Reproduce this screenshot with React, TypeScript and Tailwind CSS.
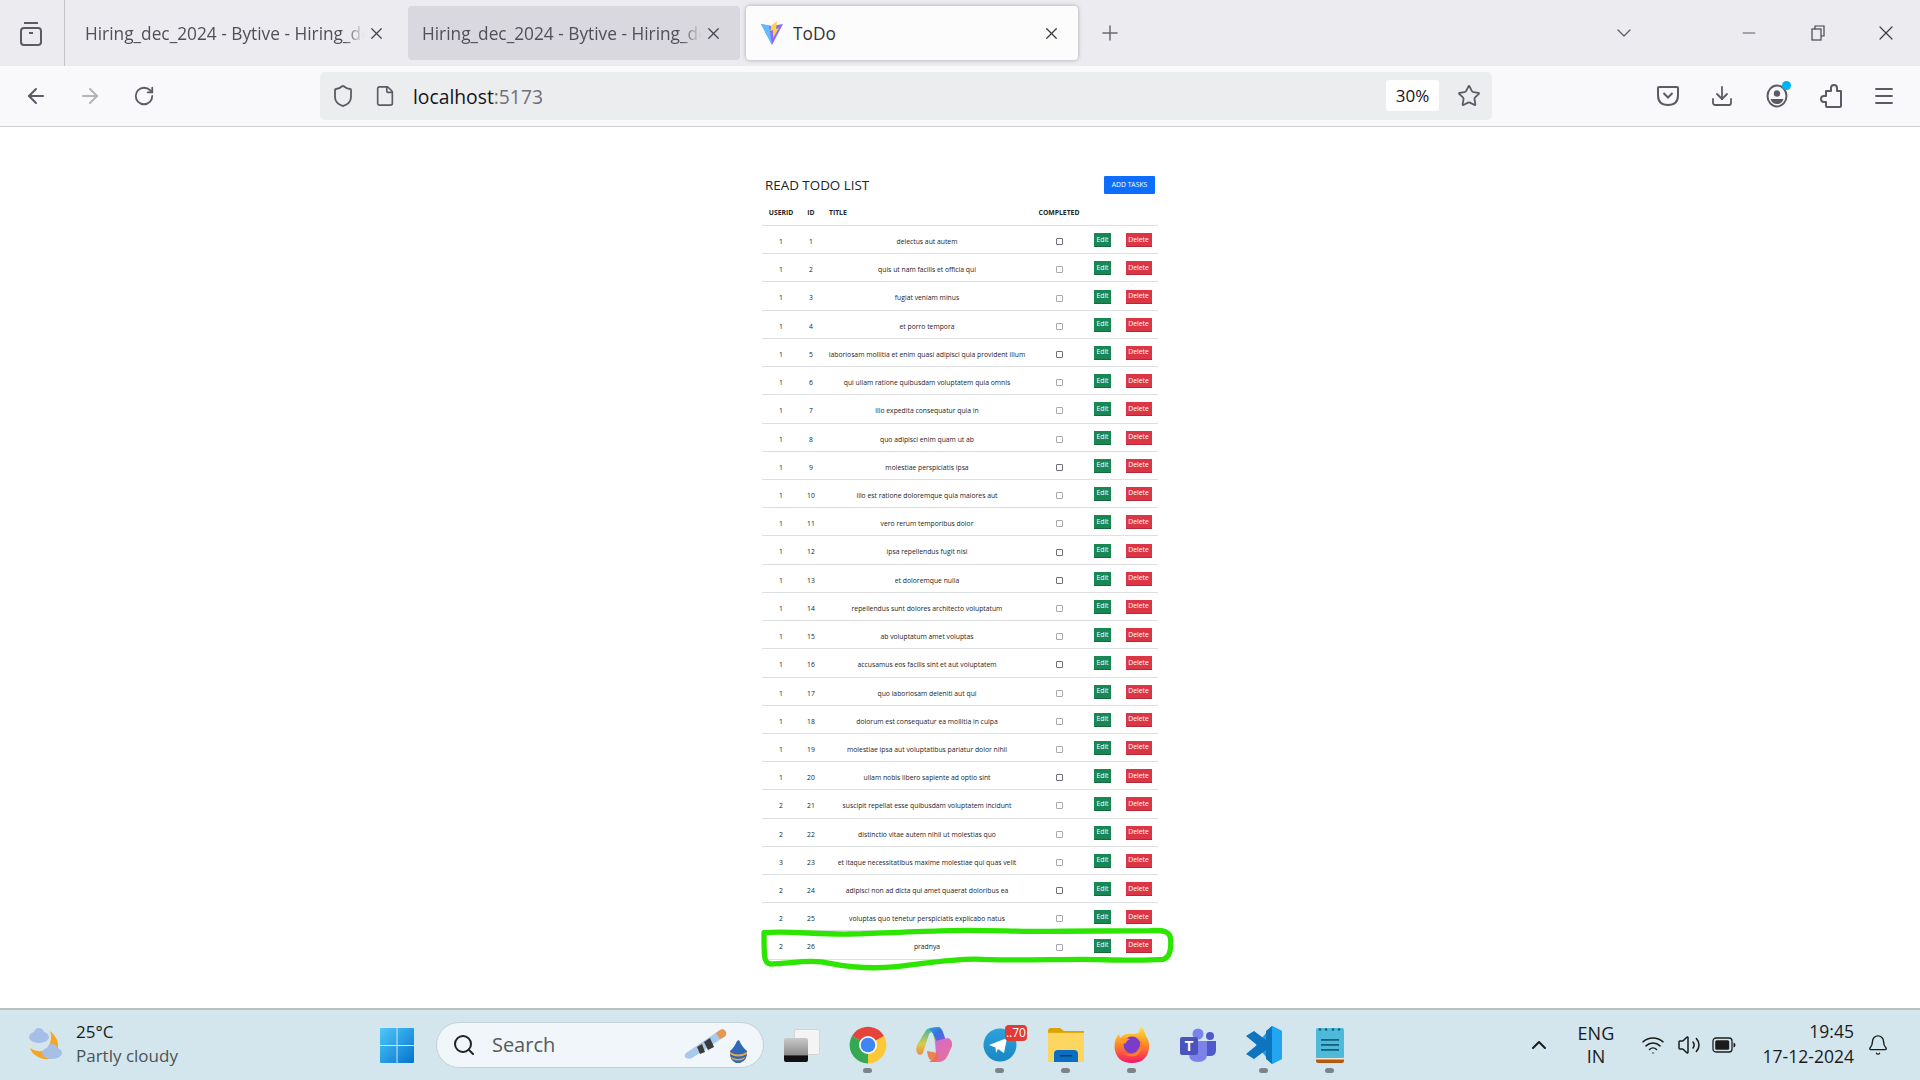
import React from "react"
import { ArrowLeft, ArrowRight, RotateCw, Shield, File, Star, Download, Menu, X, Plus, ChevronDown, ChevronUp, Minus, Search, Wifi, Volume2, Bell } from "lucide-react"

const titles = [
  "delectus aut autem",
  "quis ut nam facilis et officia qui",
  "fugiat veniam minus",
  "et porro tempora",
  "laboriosam mollitia et enim quasi adipisci quia provident illum",
  "qui ullam ratione quibusdam voluptatem quia omnis",
  "illo expedita consequatur quia in",
  "quo adipisci enim quam ut ab",
  "molestiae perspiciatis ipsa",
  "illo est ratione doloremque quia maiores aut",
  "vero rerum temporibus dolor",
  "ipsa repellendus fugit nisi",
  "et doloremque nulla",
  "repellendus sunt dolores architecto voluptatum",
  "ab voluptatum amet voluptas",
  "accusamus eos facilis sint et aut voluptatem",
  "quo laboriosam deleniti aut qui",
  "dolorum est consequatur ea mollitia in culpa",
  "molestiae ipsa aut voluptatibus pariatur dolor nihil",
  "ullam nobis libero sapiente ad optio sint",
  "suscipit repellat esse quibusdam voluptatem incidunt",
  "distinctio vitae autem nihil ut molestias quo",
  "et itaque necessitatibus maxime molestiae qui quas velit",
  "adipisci non ad dicta qui amet quaerat doloribus ea",
  "voluptas quo tenetur perspiciatis explicabo natus",
  "pradnya",
]

// these rows land on whole pixels in the reference, so their boxes look darker
const darkBoxes = [1, 5, 9, 12, 13, 16, 20, 24]

const ViteLogo = () => (
  <svg width="22" height="24" viewBox="0 0 22 24">
    <path d="M0 3 L11 5 L22 3 L11 24 Z" fill="#8f6cf5" />
    <path d="M0 3 L8 4.5 L11 24 Z" fill="#5ec0f8" />
    <path d="M10 5 L16 0 L15 8 L18 7 L12 17 L12 9 L9.500 10 Z" fill="#ffd23f" />
  </svg>
)

const Tab = ({ title, active, hover }: { title: string; active?: boolean; hover?: boolean }) => (
  <div className={`flex h-[54px] w-[332px] items-center rounded-[4px] ${active ? "bg-[#fcfcfc] shadow-[0_0_4px_rgba(0,0,0,0.3)]" : hover ? "bg-[#d9d8de]" : ""}`}>
    {active ? (
      <div className="ml-[15px] mr-[10px] flex w-[22px] justify-center"><ViteLogo /></div>
    ) : (
      <div className="w-[14px]" />
    )}
    <div className={`w-[279px] overflow-hidden whitespace-nowrap pt-[1px] text-[17.3px] ${active ? "text-[#33323a]" : "text-[#50505a] [mask-image:linear-gradient(to_right,black_93%,transparent)]"}`}>
      {title}
    </div>
    <X className={active ? "-ml-[30px] text-[#3c3c44]" : "ml-[3px] text-[#45454d]"} size={19} strokeWidth={1.6} />
  </div>
)

const ToolIcon = ({ children, w }: { children: React.ReactNode; w: string }) => (
  <div className={`flex items-center justify-center ${w}`}>{children}</div>
)

const Chrome = () => (
  <svg width="38" height="38" viewBox="0 0 38 38">
    <path d="M19 19 L3 10 A18.500 18.500 0 0 1 35 10 Z" fill="#e5443a" />
    <path d="M19 19 L35 10 A18.500 18.500 0 0 1 19 37.500 Z" fill="#fcc934" />
    <path d="M19 19 L19 37.500 A18.500 18.500 0 0 1 3 10 Z" fill="#34a853" />
    <circle cx="19" cy="19" r="9" fill="#fff" />
    <circle cx="19" cy="19" r="7.300" fill="#3f85f3" />
  </svg>
)

const Copilot = () => (
  <svg width="38" height="36" viewBox="0 0 38 36">
    <defs>
      <linearGradient id="copa" x1="0" y1="0" x2="1" y2="1">
        <stop offset="0" stopColor="#2d9fe0" />
        <stop offset="0.5" stopColor="#3b6fe0" />
        <stop offset="1" stopColor="#7c5ce0" />
      </linearGradient>
      <linearGradient id="copb" x1="0" y1="0" x2="0" y2="1">
        <stop offset="0" stopColor="#3bb3a8" />
        <stop offset="0.6" stopColor="#d9cc4a" />
        <stop offset="1" stopColor="#f08a3c" />
      </linearGradient>
      <linearGradient id="copc" x1="0" y1="0" x2="1" y2="1">
        <stop offset="0" stopColor="#c86ae0" />
        <stop offset="1" stopColor="#f0708a" />
      </linearGradient>
    </defs>
    <path d="M10 5 Q12 1 16 1 L24 1 Q27 2 28 8 L30 16 L20 16 L18 6 Q16 4 14 7 L8 26 Q6 29 3 27 Q0 24 2 18 Z" fill="url(#copb)" />
    <path d="M14 2 Q16 0 24 0 Q27 1 29 8 L31 14 L21 14 Q19 6 14 2 Z" fill="url(#copa)" />
    <path d="M20 14 L33 11 Q38 13 37 19 L33 28 Q30 35 24 35 L14 35 Q19 33 21 28 Z" fill="url(#copc)" />
    <path d="M12 24 Q13 35 20 35 Q24 33 23 26 Z" fill="#f0703c" opacity="0.85" />
  </svg>
)

const Telegram = () => (
  <div className="relative">
    <svg width="34" height="34" viewBox="0 0 34 34">
      <defs>
        <linearGradient id="tg" x1="0" y1="0" x2="0" y2="1">
          <stop offset="0" stopColor="#2aa3dc" />
          <stop offset="1" stopColor="#1a87c3" />
        </linearGradient>
      </defs>
      <circle cx="17" cy="17" r="16.500" fill="url(#tg)" />
      <path d="M6 17 L24 10 L21 25 L15 21 L13 25 L12.500 19.500 Z" fill="#fff" />
    </svg>
    <div className="absolute -right-[10px] -top-[3px] flex h-[16px] w-[22px] items-center justify-center rounded-[4px] bg-[#e53935] text-[12px] text-white">..70</div>
  </div>
)

const Folder = () => (
  <svg width="36" height="34" viewBox="0 0 36 34">
    <path d="M0 3 Q0 0 3 0 L12 0 L16 3 L36 3 L36 10 L0 10 Z" fill="#d9a300" />
    <rect x="0" y="4" width="36" height="30" fill="#fdd662" />
    <rect x="0" y="4" width="36" height="1" fill="#e0a90c" />
    <path d="M6 34 L6 26 Q6 22 10 22 L26 22 Q30 22 30 26 L30 34 Z" fill="#0a6fc2" />
    <rect x="12" y="27" width="12" height="1.500" fill="#053e72" />
  </svg>
)

const Firefox = () => (
  <svg width="36" height="38" viewBox="0 0 36 38">
    <defs>
      <linearGradient id="ff" x1="0.500" y1="0" x2="0.500" y2="1">
        <stop offset="0" stopColor="#ffe83d" />
        <stop offset="0.5" stopColor="#ff8a24" />
        <stop offset="1" stopColor="#f5156a" />
      </linearGradient>
    </defs>
    <path d="M27 0 Q31 5 32 10 Q36 16 35 22 Q33 37 18 37 Q2 37 0.500 21 Q0.500 13 5 8 L6 12 Q11 7 17 8 Q24 8 25 6 Z" fill="url(#ff)" />
    <circle cx="18" cy="19" r="8.500" fill="#7b3cc8" />
    <path d="M4 14 Q10 11 16 13 Q12 15 12 17 Q8 19 4 14 Z" fill="#ff9a2a" />
    <path d="M26 13 Q32 22 24 29 Q16 33 9 27 Q16 30 22 26 Q28 20 26 13 Z" fill="#ff7a24" />
  </svg>
)

const Teams = () => (
  <svg width="36" height="34" viewBox="0 0 36 34">
    <circle cx="18" cy="6" r="5.500" fill="#7b83eb" />
    <circle cx="30" cy="8" r="4" fill="#5059c9" />
    <path d="M24 13 L36 13 L36 22 Q36 28 30 28 L24 28 Z" fill="#5059c9" />
    <path d="M9 13 L27 13 L27 26 Q27 34 18 34 Q9 34 9 26 Z" fill="#7b83eb" />
    <rect x="0" y="9" width="18" height="18" rx="2" fill="#4b53bc" />
    <text x="9" y="23" textAnchor="middle" fontSize="14" fontWeight="700" fill="#fff" fontFamily="Liberation Sans">T</text>
  </svg>
)

const VSCode = () => (
  <svg width="36" height="38" viewBox="0 0 36 38">
    <path d="M26 0 L36 5 L36 33 L26 38 L10 19 Z" fill="#1f9cf0" />
    <path d="M26 0 L26 38 L20 33 L20 24 L8 33 L0 28 L11 19 L0 10 L8 5 L20 14 L20 5 Z" fill="#0e74bd" />
    <path d="M26 0 L36 5 L36 33 L26 38 Z" fill="#23a6f2" />
  </svg>
)

const Notepad = () => (
  <svg width="28" height="36" viewBox="0 0 28 36">
    <rect x="0" y="1" width="28" height="31" rx="2" fill="#4fb9d9" />
    <path d="M0 32 L28 32 L28 34 Q28 36 26 36 L2 36 Q0 36 0 34 Z" fill="#b35a10" />
    <rect x="0" y="31" width="28" height="1.500" fill="#f5e6d0" />
    {[4, 10, 17, 23].map((x) => <circle key={x} cx={x} cy="2.500" r="1.300" fill="#1c5d78" />)}
    {[12, 17, 22].map((y) => <rect key={y} x="5" y={y} width="18" height="1.800" fill="#14617f" />)}
  </svg>
)

const Weather = () => (
  <svg width="36" height="36" viewBox="0 0 36 36">
    <path d="M22 4 Q34 14 28 26 Q22 36 10 30 Q3 26 2 21 Q14 28 20 20 Q25 12 22 4 Z" fill="#f6a623" />
    <ellipse cx="11" cy="10" rx="10" ry="6" fill="#a5bfe8" />
    <circle cx="11" cy="6" r="5" fill="#a5bfe8" />
    <ellipse cx="24" cy="26" rx="10" ry="6" fill="#a5bfe8" />
    <circle cx="24" cy="22" r="5" fill="#a5bfe8" />
  </svg>
)

const WindowsLogo = () => (
  <svg width="34" height="35" viewBox="0 0 34 35">
    <defs>
      <linearGradient id="win" x1="0" y1="0" x2="1" y2="1">
        <stop offset="0" stopColor="#4fc8f8" />
        <stop offset="1" stopColor="#0573cf" />
      </linearGradient>
    </defs>
    <path d="M0 1 Q0 0 1 0 L16.500 0 L16.500 17 L0 17 Z M17.500 0 L33 0 Q34 0 34 1 L34 17 L17.500 17 Z M0 18 L16.500 18 L16.500 35 L1 35 Q0 35 0 34 Z M17.500 18 L34 18 L34 34 Q34 35 33 35 L17.500 35 Z" fill="url(#win)" />
  </svg>
)

const SearchArt = () => (
  <svg width="78" height="36" viewBox="0 0 78 36">
    <path d="M4 26 L38 3 Q42 1 44 5 Q45 8 42 10 L10 31 Q5 33 3 30 Q2 28 4 26 Z" fill="#a9c8ee" />
    <path d="M34 6 L38 3 Q42 1 44 5 Q45 8 42 10 L38 12 Z" fill="#e8974e" />
    <path d="M22 15 L28 11 L32 20 L26 23 Z" fill="#3b3b3b" />
    <path d="M15 20 L20 17 L23 25 L18 27 Z" fill="#3b3b3b" />
    <path d="M54 36 Q47 33 48 24 Q52 21 55 14 L57 13 Q60 20 65 24 Q66 33 58 36 Z" fill="#2f68b4" />
    <path d="M48 25 Q56 30 65 25 L65 27 Q56 32 48 27 Z M49 30 Q56 34 63 30 L62 32 Q56 35 50 32 Z" fill="#eda64a" />
  </svg>
)

const TaskView = () => (
  <div className="relative h-[33px] w-[36px]">
    <div className="absolute right-0 top-0 h-[26px] w-[26px] rounded-[2px] border border-[#d4d4d4] bg-[#f4f4f4]" />
    <div className="absolute bottom-0 left-0 h-[24px] w-[24px] rounded-[2px] bg-[linear-gradient(to_bottom,#c9c9c9,#8d8d8d_70%,#111_75%)]" />
  </div>
)

const TaskbarApp = ({ children, dot }: { children: React.ReactNode; dot?: boolean }) => (
  <div className="relative flex h-full w-[66px] items-center justify-center">
    {children}
    {dot && <div className="absolute bottom-[7px] h-[5px] w-[9px] rounded-full bg-[#7c8489]" />}
  </div>
)

const Profile = () => (
  <div className="relative">
    <svg width="22" height="24" viewBox="0 0 22 24" fill="none">
      <ellipse cx="11" cy="12" rx="9.500" ry="10.500" stroke="#5b5b66" strokeWidth="2" />
      <circle cx="11" cy="9.500" r="3.200" fill="#5b5b66" />
      <path d="M4.500 15 L17.500 15 Q16 20 11 20 Q6 20 4.500 15 Z" fill="#5b5b66" />
    </svg>
    <div className="absolute -right-[3px] -top-[3px] h-[9px] w-[9px] rounded-full bg-[#00b3f4]" />
  </div>
)

const PocketIcon = () => (
  <svg width="22" height="20" viewBox="0 0 22 20" fill="none" stroke="#5b5b66" strokeWidth="2">
    <path d="M2 1 L20 1 Q21 1 21 2 L21 9 Q21 19 11 19 Q1 19 1 9 L1 2 Q1 1 2 1 Z" />
    <path d="M6.500 7 L11 11.500 L15.500 7" />
  </svg>
)

const ExtensionIcon = () => (
  <svg width="22" height="24" viewBox="0 0 22 24" fill="none" stroke="#5b5b66" strokeWidth="2" strokeLinejoin="round">
    <path d="M11 7 L11 4 Q11 1 14 1 Q17 1 17 4 L17 7 L21 7 L21 22 Q21 23 20 23 L7 23 Q6 23 6 22 L6 18 L4 18 Q1 18 1 15 Q1 12 4 12 L6 12 L6 7 Z" />
  </svg>
)

const Battery = () => (
  <svg width="24" height="16" viewBox="0 0 24 16" fill="none">
    <rect x="1" y="1" width="19" height="14" rx="3" stroke="#1c1c1c" strokeWidth="1.300" />
    <rect x="3.200" y="3.200" width="14" height="9.600" rx="1.500" fill="#1c1c1c" />
    <path d="M21.500 5.500 Q23.500 6 23.500 8 Q23.500 10 21.500 10.500 Z" fill="#1c1c1c" />
  </svg>
)

const Row = ({ id, title }: { id: number; title: string }) => {
  const userId = id === 23 ? 3 : id > 20 ? 2 : 1
  return (
    <div className="grid h-[28.23px] grid-cols-[38px_22px_210px_54px_33px_39px] items-center border-b border-[#dddfe1] text-center text-[6.8px] text-[#212529]">
      <div className="pt-[5px]">{userId}</div>
      <div className="pt-[5px]">{id}</div>
      <div className="whitespace-nowrap pt-[5px]">{title}</div>
      <div className="flex justify-center pt-[4px]">
        <div className={`h-[7px] w-[7px] rounded-[1px] border ${darkBoxes.includes(id) ? "border-[#6f6f78]" : "border-[#a8a8ae]"}`} />
      </div>
      <div className="flex justify-center pt-[1px]">
        <button className="h-[14px] w-[17px] border-b border-[#14693f] bg-[#198754] text-[6.8px] text-white">Edit</button>
      </div>
      <div className="flex justify-center pt-[1px]">
        <button className="h-[14px] w-[26px] border-b border-[#b02a37] bg-[#dc3545] text-[6.8px] text-white">Delete</button>
      </div>
    </div>
  )
}

export default function App() {
  return (
    <div className="flex h-screen flex-col overflow-hidden bg-white font-['Open_Sans',sans-serif]">
      {/* tab strip */}
      <div className="flex h-[66px] items-center bg-[#ecebf0]">
        <div className="flex h-full w-[65px] items-center justify-center border-r border-[#c4c4c8] pr-[3px]">
          <svg width="24" height="26" viewBox="0 0 24 26" fill="none" stroke="#5b5b66" strokeWidth="2">
            <rect x="2" y="8" width="20" height="17" rx="3" />
            <path d="M5 3 L19 3" />
            <path d="M10 13 L14 13" />
          </svg>
        </div>
        <div className="w-[6px]" />
        <Tab title="Hiring_dec_2024 - Bytive - Hiring_dec_2024" />
        <div className="w-[5px]" />
        <Tab title="Hiring_dec_2024 - Bytive - Hiring_dec_2024" hover />
        <div className="w-[6px]" />
        <Tab title="ToDo" active />
        <Plus className="ml-[20px] text-[#6a6a72]" size={24} strokeWidth={1.5} />
        <ChevronDown className="ml-[490px] text-[#5b5b66]" size={24} strokeWidth={1.3} />
        <Minus className="ml-[103px] text-[#5b5b66]" size={20} strokeWidth={1.2} />
        <svg className="ml-[51px]" width="16" height="16" viewBox="0 0 16 16" fill="none" stroke="#45454d" strokeWidth="1.200">
          <rect x="2" y="4" width="9" height="11" />
          <path d="M5 4 L5 1 L14 1 L14 11 L11 11" />
        </svg>
        <X className="ml-[48px] text-[#3c3c44]" size={24} strokeWidth={1.2} />
      </div>

      {/* toolbar */}
      <div className="flex h-[61px] items-center border-b border-[#cfcfd3] bg-[#f9f9fb] pb-[1px]">
        <ToolIcon w="w-[72px]"><ArrowLeft className="text-[#5b5b66]" size={24} strokeWidth={2} /></ToolIcon>
        <ToolIcon w="w-[36px]"><ArrowRight className="text-[#b4b4b8]" size={24} strokeWidth={2} /></ToolIcon>
        <ToolIcon w="w-[72px]"><RotateCw className="text-[#5b5b66]" size={22} strokeWidth={2} /></ToolIcon>
        <div className="ml-[140px] flex h-[48px] w-[1172px] items-center rounded-[5px] bg-[#ecedef]">
          <Shield className="ml-[11px] text-[#5b5b66]" size={24} strokeWidth={1.8} />
          <File className="ml-[19px] text-[#5b5b66]" size={22} strokeWidth={1.8} />
          <div className="ml-[17px] pt-[3px] text-[19.3px] text-[#15141a]">localhost<span className="text-[#70707a]">:5173</span></div>
          <div className="ml-auto flex h-[31px] w-[53px] items-center justify-center rounded-[3px] bg-white pt-[1px] text-[17px] text-[#15141a]">30%</div>
          <Star className="ml-[18px] mr-[11px] text-[#5b5b66]" size={24} strokeWidth={1.8} />
        </div>
        <ToolIcon w="w-[54px] ml-[149px]"><PocketIcon /></ToolIcon>
        <ToolIcon w="w-[54px]"><Download className="text-[#5b5b66]" size={24} strokeWidth={1.8} /></ToolIcon>
        <ToolIcon w="w-[56px]"><Profile /></ToolIcon>
        <ToolIcon w="w-[52px]"><ExtensionIcon /></ToolIcon>
        <ToolIcon w="w-[54px]"><Menu className="text-[#5b5b66]" size={24} strokeWidth={1.8} /></ToolIcon>
      </div>

      {/* page */}
      <main className="flex-1">
        <div className="relative mx-auto w-[396px] pt-[49px]">
          <div className="flex h-[18px] items-center justify-between px-[3px]">
            <h1 className="text-[13.4px] text-[#212529]">READ TODO LIST</h1>
            <button className="h-[18px] w-[51px] rounded-[1px] bg-[#0d6efd] text-[6.8px] text-white">ADD TASKS</button>
          </div>
          <div className="mt-[7px] grid h-[25px] grid-cols-[38px_22px_210px_54px_33px_39px] items-center border-b border-[#dddfe1] text-[6.8px] font-bold text-[#212529]">
            <div className="text-center">USERID</div>
            <div className="text-center">ID</div>
            <div className="pl-[7px]">TITLE</div>
            <div className="text-center">COMPLETED</div>
          </div>
          {titles.map((title, i) => (
            <Row key={i} id={i + 1} title={title} />
          ))}
          {/* marker scribble around the new row */}
          <svg className="absolute left-[-12px] top-[733px]" width="430" height="120" viewBox="0 0 1290 360" fill="none">
            <path d="M42 218 C120 212 200 224 300 222 C400 220 500 214 600 212 C700 208 800 216 900 214 C1000 212 1100 214 1200 212 C1240 210 1262 214 1262 240 C1264 270 1258 292 1240 298 C1160 304 1060 298 1000 298 C900 298 800 302 700 298 C620 292 520 312 440 320 C360 328 300 322 240 310 C180 296 120 312 60 312 C42 308 42 290 42 218 Z" stroke="#2ce600" strokeWidth="16" strokeLinejoin="round" />
          </svg>
        </div>
      </main>

      {/* windows taskbar */}
      <div className="flex h-[72px] items-center border-t-2 border-[#b9bfc2] bg-[#d3e6ed] text-[#1b1b1b]">
        <div className="ml-[28px] flex items-center">
          <Weather />
          <div className="ml-[12px] flex flex-col pb-[3px]">
            <span className="text-[17px] leading-[24px]">25°C</span>
            <span className="text-[17px] leading-[24px] text-[#4d5356]">Partly cloudy</span>
          </div>
        </div>
        <div className="ml-[202px]"><WindowsLogo /></div>
        <div className="ml-[22px] flex h-[46px] w-[328px] items-center rounded-full border border-[#c0d2da] bg-[#f0f6f9] pl-[15px] pr-[3px]">
          <Search className="text-[#222]" size={24} strokeWidth={2} />
          <span className="ml-[16px] text-[20px] text-[#565a5d]">Search</span>
          <div className="ml-auto"><SearchArt /></div>
        </div>
        <div className="ml-[20px]"><TaskView /></div>
        <div className="ml-[15px] flex h-full">
          <TaskbarApp dot><Chrome /></TaskbarApp>
          <TaskbarApp><Copilot /></TaskbarApp>
          <TaskbarApp dot><Telegram /></TaskbarApp>
          <TaskbarApp dot><Folder /></TaskbarApp>
          <TaskbarApp dot><Firefox /></TaskbarApp>
          <TaskbarApp><Teams /></TaskbarApp>
          <TaskbarApp dot><VSCode /></TaskbarApp>
          <TaskbarApp dot><Notepad /></TaskbarApp>
        </div>
        <ChevronUp className="ml-[164px] text-[#1b1b1b]" size={24} strokeWidth={2} />
        <div className="ml-[25px] flex w-[40px] flex-col items-center text-[18px] leading-[23px]">
          <span>ENG</span>
          <span>IN</span>
        </div>
        <Wifi className="ml-[25px]" size={24} strokeWidth={1.5} />
        <Volume2 className="ml-[12px]" size={24} strokeWidth={1.5} />
        <div className="ml-[11px]"><Battery /></div>
        <div className="ml-[24px] flex w-[94px] flex-col items-end text-[17.5px]">
          <span className="leading-[23px]">19:45</span>
          <span className="whitespace-nowrap leading-[27px]">17-12-2024</span>
        </div>
        <Bell className="ml-[13px]" size={22} strokeWidth={1.5} />
      </div>
    </div>
  )
}
